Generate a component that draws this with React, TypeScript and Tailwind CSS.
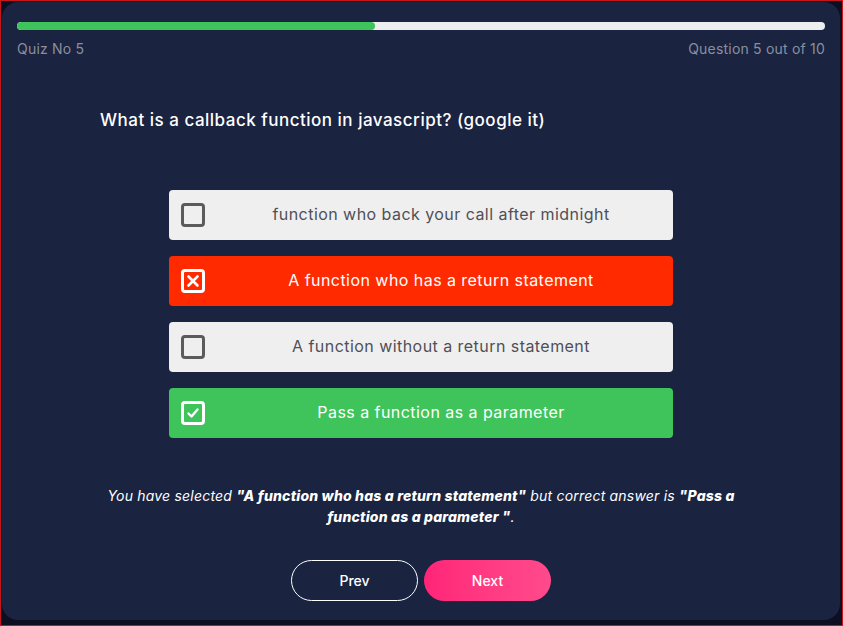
import React from 'react';

type Status = 'idle' | 'wrong' | 'right';

function Box({ status }: { status: Status }) {
  if (status === 'idle') {
    return <div className="w-6 h-6 rounded-[4px] border-[3px] border-[#5b5b5b] shrink-0" />;
  }
  return (
    <div className="w-6 h-6 rounded-[4px] border-[3px] border-white shrink-0 flex items-center justify-center">
      {status === 'wrong' ? (
        <svg width="14" height="14" viewBox="0 0 14 14">
          <path d="M2.5 2.5 L11.5 11.5 M11.5 2.5 L2.5 11.5" stroke="white" strokeWidth="2.6" strokeLinecap="round" />
        </svg>
      ) : (
        <svg width="14" height="14" viewBox="0 0 14 14">
          <path d="M2.5 7.5 L5.5 10.5 L11.5 3.5" stroke="white" strokeWidth="2.4" fill="none" strokeLinecap="round" strokeLinejoin="round" />
        </svg>
      )}
    </div>
  );
}

export default function App() {
  const options: { text: string; status: Status }[] = [
    { text: 'function who back your call after midnight', status: 'idle' },
    { text: 'A function who has a return statement', status: 'wrong' },
    { text: 'A function without a return statement', status: 'idle' },
    { text: 'Pass a function as a parameter', status: 'right' },
  ];

  const styles: Record<Status, string> = {
    idle: 'bg-[#efefef] text-[#4f4f57]',
    wrong: 'bg-[#ff2a00] text-white',
    right: 'bg-[#3ec45a] text-white',
  };

  return (
    <div
      className="w-[843px] h-[626px] bg-[#0c0e22] border border-[#c8151b] pl-px pt-px pr-[2px] pb-[5px]"
      style={{ fontFamily: 'Inter, "Noto Sans", sans-serif' }}
    >
      <div className="h-full rounded-[16px] bg-[#1a2340] px-[15px] pt-[20px]">
        {/* progress */}
        <div className="h-2 rounded-full bg-[#eceef0] overflow-hidden">
          <div className="h-full w-[44.3%] rounded-full bg-[#3ec45a]" />
        </div>
        <div className="flex justify-between mt-[9px] text-[14px] leading-5 text-[#8a8f9e] tracking-[0.2px]">
          <span>Quiz No 5</span>
          <span>Question 5 out of 10</span>
        </div>

        <h2 className="mt-[48px] pl-[83px] text-[17px] leading-[26px] font-medium text-white tracking-[0.5px]">
          What is a callback function in javascript? (google it)
        </h2>

        <div className="mt-[57px] w-[504px] mx-auto flex flex-col gap-4">
          {options.map((o, i) => (
            <div key={i} className={`h-[50px] rounded-[4px] flex items-center pl-3 gap-1 ${styles[o.status]}`}>
              <Box status={o.status} />
              <div className="flex-1 text-center text-[16px] tracking-[0.45px] pb-[3px]">{o.text}</div>
            </div>
          ))}
        </div>

        <p className="mt-[47px] text-center italic text-[14px] leading-[21px] text-white tracking-[0.2px]">
          You have selected <b className="font-extrabold">"A function who has a return statement"</b> but correct answer is{' '}
          <b className="font-extrabold">"Pass a</b>
          <br />
          <b className="font-extrabold">function as a parameter "</b>.
        </p>

        <div className="mt-[33px] flex justify-center gap-[6px]">
          <button className="w-[127px] h-[41px] rounded-full border border-white text-white text-[14px] font-medium">
            Prev
          </button>
          <button className="w-[127px] h-[41px] rounded-full bg-gradient-to-r from-[#ff2478] to-[#ff4a8c] text-white text-[14px] font-medium">
            Next
          </button>
        </div>
      </div>
    </div>
  );
}
